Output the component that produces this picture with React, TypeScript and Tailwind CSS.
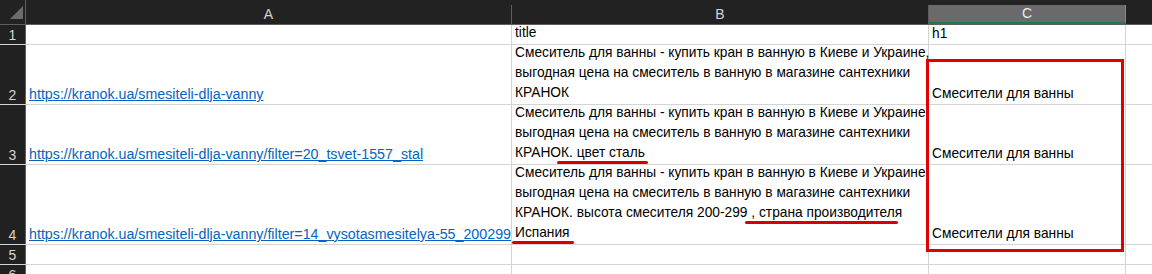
const font = { fontFamily: '"Liberation Sans", Arial, sans-serif' };

const rows = [
  { n: 1, h: 'h-[20px]', a: '', b: ['title'], c: 'h1' },
  {
    n: 2,
    h: 'h-[60px]',
    a: 'https://kranok.ua/smesiteli-dlja-vanny',
    b: [
      'Смеситель для ванны - купить кран в ванную в Киеве и Украине,',
      'выгодная цена на смеситель в ванную в магазине сантехники',
      'КРАНОК',
    ],
    c: 'Смесители для ванны',
  },
  {
    n: 3,
    h: 'h-[60px]',
    a: 'https://kranok.ua/smesiteli-dlja-vanny/filter=20_tsvet-1557_stal',
    b: [
      'Смеситель для ванны - купить кран в ванную в Киеве и Украине,',
      'выгодная цена на смеситель в ванную в магазине сантехники',
      'КРАНОК. цвет сталь',
    ],
    c: 'Смесители для ванны',
  },
  {
    n: 4,
    h: 'h-[80px]',
    a: 'https://kranok.ua/smesiteli-dlja-vanny/filter=14_vysotasmesitelya-55_200299',
    b: [
      'Смеситель для ванны - купить кран в ванную в Киеве и Украине,',
      'выгодная цена на смеситель в ванную в магазине сантехники',
      'КРАНОК. высота смесителя 200-299 , страна производителя',
      'Испания',
    ],
    c: 'Смесители для ванны',
  },
  { n: 5, h: 'h-[20px]', a: '', b: [], c: '' },
  { n: 6, h: 'h-[20px]', a: '', b: [], c: '' },
];

export default function App() {
  return (
    <div className="relative w-[1152px] h-[274px] overflow-hidden bg-white" style={font}>
      {/* column headers */}
      <div className="flex h-[25px] bg-[#222222] border-b border-[#5e5e5e]">
        <div className="relative w-[26px] shrink-0 border-r border-[#5e5e5e]">
          <div className="absolute left-[10px] top-[6px] w-0 h-0 border-l-[13px] border-l-transparent border-b-[13px] border-b-[#6b6b6b]" />
        </div>
        <div className="w-[486px] shrink-0 flex items-end justify-center pb-[1px] mt-[5px] border-r border-[#5e5e5e] text-[14px] leading-[18px] text-[#d4d4d4]">
          A
        </div>
        <div className="w-[417px] shrink-0 flex items-end justify-center pb-[1px] mt-[5px] border-r border-[#5e5e5e] text-[14px] leading-[18px] text-[#d4d4d4]">
          B
        </div>
        <div className="w-[197px] shrink-0 flex items-end justify-center mt-[5px] bg-[#6a6a6a] border-r border-[#8a8a8a] border-b-2 border-b-[#1f7a45] text-[14px] leading-[17px] text-[#ececec]">
          C
        </div>
        <div className="flex-1" />
      </div>

      {rows.map((r) => (
        <div key={r.n} className={`flex ${r.h} border-b border-[#d4d4d4]`}>
          <div className="w-[26px] shrink-0 bg-[#212121] border-r border-[#5e5e5e] flex items-end justify-center text-[14px] leading-[17px] text-[#d4d4d4]">
            {r.n}
          </div>
          <div className="w-[486px] shrink-0 border-r border-[#d4d4d4] flex items-end pl-[3px] pb-[1px] whitespace-nowrap text-[14.25px] leading-[18px]">
            {r.a && <span className="text-[#0563c1] underline">{r.a}</span>}
          </div>
          <div className="w-[417px] shrink-0 border-r border-[#d4d4d4] flex flex-col justify-end pl-[3px] pb-[1px] whitespace-nowrap text-[13.75px] leading-[20px] text-black">
            {r.b.map((l, i) => (
              <div key={i}>{l}</div>
            ))}
          </div>
          <div className="w-[197px] shrink-0 border-r border-[#d4d4d4] flex items-end pl-[3px] pb-[1px] whitespace-nowrap text-[13.75px] leading-[18px] text-black">
            {r.c}
          </div>
          <div className="flex-1" />
        </div>
      ))}

      {/* annotations */}
      <div className="absolute left-[926px] top-[59px] w-[198px] h-[193px] border-[3px] border-[#e00000]" />
      <div className="absolute left-[557px] top-[161px] w-[91px] h-[3px] bg-[#d40000] rounded-full" />
      <div className="absolute left-[745px] top-[221px] w-[153px] h-[3px] bg-[#d40000] rounded-full" />
      <div className="absolute left-[512px] top-[241px] w-[62px] h-[3px] bg-[#d40000] rounded-full" />
    </div>
  );
}
